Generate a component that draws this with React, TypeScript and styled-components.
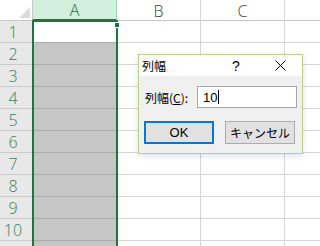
import React from 'react';
import styled, { createGlobalStyle } from 'styled-components';

const GlobalStyle = createGlobalStyle`
  html, body {
    margin: 0;
    padding: 0;
    background: #fff;
  }
`;

const ROWS = [1, 2, 3, 4, 5, 6, 7, 8, 9, 10, 11];
const COLS = ['A', 'B', 'C', 'D'];

const Sheet = styled.div`
  position: relative;
  width: 320px;
  height: 246px;
  overflow: hidden;
  display: grid;
  grid-template-columns: 33px repeat(4, 84px);
  grid-template-rows: 21px repeat(11, 22px);
  font-family: 'Open Sans', 'Noto Sans', sans-serif;
  background: #fff;
`;

const Corner = styled.div`
  box-sizing: border-box;
  border-right: 1px solid #c6c6c6;
  border-bottom: 1px solid #c6c6c6;
  display: flex;
  align-items: flex-end;
  justify-content: flex-end;
  padding: 0 2px 2px 0;
`;

const ColHeader = styled.div<{ $selected?: boolean }>`
  box-sizing: border-box;
  display: flex;
  align-items: center;
  justify-content: center;
  font-size: 16px;
  font-weight: 300;
  color: ${(p) => (p.$selected ? '#217346' : '#444')};
  background: ${(p) => (p.$selected ? '#d2eedc' : '#fff')};
  border-right: 1px solid ${(p) => (p.$selected ? '#9fd5b7' : '#d4d4d4')};
  border-bottom: ${(p) => (p.$selected ? '2px solid #217346' : '1px solid #c6c6c6')};
  padding-top: 1px;
`;

const RowHeader = styled.div`
  box-sizing: border-box;
  display: flex;
  align-items: center;
  justify-content: center;
  padding-right: 6px;
  font-size: 16px;
  font-weight: 300;
  color: #3b8058;
  background: #e8e8e8;
  border-right: 1px solid #c6c6c6;
  border-bottom: 1px solid #c9c9c9;
`;

const Cell = styled.div<{ $selected?: boolean; $active?: boolean }>`
  box-sizing: border-box;
  background: ${(p) => (p.$selected && !p.$active ? '#c6c6c6' : '#fff')};
  border-right: 1px solid #d4d4d4;
  border-bottom: 1px solid ${(p) => (p.$selected ? '#ababab' : '#d4d4d4')};
`;

const Selection = styled.div`
  position: absolute;
  left: 32px;
  top: 20px;
  width: 86px;
  height: 240px;
  box-sizing: border-box;
  border: 2px solid #217346;
  pointer-events: none;
`;

const FillHandle = styled.div`
  position: absolute;
  right: -4px;
  top: 0px;
  width: 6px;
  height: 6px;
  box-sizing: border-box;
  background: #217346;
  border: 1px solid #fff;
`;

const Dialog = styled.div`
  position: absolute;
  left: 138px;
  top: 54px;
  width: 165px;
  height: 100px;
  box-sizing: border-box;
  border: 1px solid #b3d58a;
  background: #f0f0f0;
  display: flex;
  flex-direction: column;
  font-family: 'Noto Sans CJK JP', 'Noto Sans', sans-serif;
  color: #000;
  box-shadow: 0 2px 6px rgba(0, 0, 0, 0.12);
`;

const TitleBar = styled.div`
  height: 21px;
  background: #fff;
  display: flex;
  align-items: center;
`;

const Title = styled.div`
  flex: 1;
  padding-left: 3px;
  font-size: 12px;
`;

const TitleButton = styled.div`
  width: 44px;
  height: 21px;
  display: flex;
  align-items: center;
  justify-content: center;
  font-family: 'Liberation Sans', 'Noto Sans', sans-serif;
  font-size: 14px;
`;

const Body = styled.div`
  flex: 1;
  display: flex;
  flex-direction: column;
  padding: 10px 0 0 6px;
`;

const FieldRow = styled.div`
  display: flex;
  align-items: center;
  height: 22px;
`;

const Label = styled.div`
  width: 52px;
  font-size: 12px;

  u {
    text-decoration: underline;
  }
`;

const Field = styled.div`
  box-sizing: border-box;
  width: 100px;
  height: 22px;
  background: #fff;
  border: 1px solid #a5a5a5;
  display: flex;
  align-items: center;
  padding-left: 5px;
  font-family: 'Liberation Sans', 'Noto Sans', sans-serif;
  font-size: 13px;
`;

const Caret = styled.span`
  display: inline-block;
  width: 1px;
  height: 14px;
  background: #000;
  margin-left: 1px;
`;

const ButtonRow = styled.div`
  display: flex;
  gap: 11px;
  margin-top: 13px;
  margin-left: -1px;
`;

const Button = styled.div<{ $default?: boolean }>`
  box-sizing: border-box;
  width: 70px;
  height: 23px;
  display: flex;
  align-items: center;
  justify-content: center;
  background: #e1e1e1;
  border: ${(p) => (p.$default ? '2px solid #0078d7' : '1px solid #adadad')};
  font-size: 12px;
`;

const OkText = styled.span`
  font-family: 'Liberation Sans', 'Noto Sans', sans-serif;
  font-size: 13px;
`;

export default function App() {
  return (
    <>
      <GlobalStyle />
      <Sheet>
        <Corner>
          <svg width="11" height="11" viewBox="0 0 11 11">
            <polygon points="11,0 11,11 0,11" fill="#dcdcdc" />
          </svg>
        </Corner>
        {COLS.map((c) => (
          <ColHeader key={c} $selected={c === 'A'}>
            {/* column D only peeks in at the right edge, its letter is out of view */}
            {c !== 'D' ? c : null}
          </ColHeader>
        ))}
        {ROWS.map((r) => (
          <React.Fragment key={r}>
            {/* row 11 is only a sliver at the bottom edge, its number is out of view */}
            <RowHeader>{r <= 10 ? r : null}</RowHeader>
            {COLS.map((c) => (
              <Cell key={c} $selected={c === 'A'} $active={c === 'A' && r === 1} />
            ))}
          </React.Fragment>
        ))}

        <Selection>
          <FillHandle />
        </Selection>

        <Dialog>
          <TitleBar>
            <Title>列幅</Title>
            <TitleButton>?</TitleButton>
            <TitleButton>
              <svg width="11" height="11" viewBox="0 0 11 11">
                <path d="M0.5 0.5 L10.5 10.5 M10.5 0.5 L0.5 10.5" stroke="#000" strokeWidth="1" />
              </svg>
            </TitleButton>
          </TitleBar>
          <Body>
            <FieldRow>
              <Label>
                列幅(<u>C</u>):
              </Label>
              <Field>
                10
                <Caret />
              </Field>
            </FieldRow>
            <ButtonRow>
              <Button $default>
                <OkText>OK</OkText>
              </Button>
              <Button>キャンセル</Button>
            </ButtonRow>
          </Body>
        </Dialog>
      </Sheet>
    </>
  );
}
